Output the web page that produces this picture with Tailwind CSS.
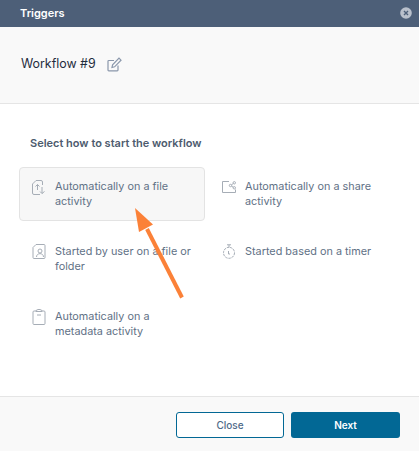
<!DOCTYPE html>
<html lang="en">
<head>
    <meta charset="UTF-8">
    <title>Triggers</title>
    <script src="https://cdn.jsdelivr.net/npm/@tailwindcss/browser@4"></script>
</head>
<body class="bg-white font-['Inter',sans-serif]">
    <div class="relative w-[419px] h-[451px] flex flex-col overflow-hidden">
        <!-- header -->
        <div class="h-[27px] bg-[#4d5f78] flex items-center justify-between pl-[20px] pr-[7px]">
            <span class="text-[11px] font-semibold text-white">Triggers</span>
            <svg class="w-[12px] h-[12px] mb-[2px]" viewBox="0 0 12 12">
                <circle cx="6" cy="6" r="5.8" fill="#b9c0cb"/>
                <path d="M4 4l4 4M8 4l-4 4" stroke="#4d5f78" stroke-width="1.4"/>
            </svg>
        </div>
        <!-- title -->
        <div class="h-[77px] bg-[#f9f9f9] border-b border-[#e5e5e5] flex items-center pl-[21px] gap-[11px] pb-[2px]">
            <span class="text-[12.4px] text-[#1f2d3d]">Workflow #9</span>
            <svg class="w-[15px] h-[15px]" viewBox="0 0 15 15" fill="none" stroke="#8a97ab" stroke-width="1.2">
                <path d="M11 8.5V13a.8.8 0 0 1-.8.8H1.8A.8.8 0 0 1 1 13V4.3a.8.8 0 0 1 .8-.8H7"/>
                <path d="M5 10.5l.6-2.7L12 1.2l2 2-6.4 6.6z"/>
            </svg>
        </div>
        <!-- options -->
        <div class="flex-1 pt-[31px] px-[19px]">
            <h2 class="pl-[11px] text-[11px] leading-[16px] font-semibold text-[#4d5b6e]">Select how to start the workflow</h2>
            <div class="mt-[16px] grid grid-cols-[186px_186px] gap-x-[4px] gap-y-[11px] text-[10.85px] leading-[15px] text-[#5f7186]">
                <div class="h-[54px] bg-[#f7f7f7] border border-[#e3e3e3] rounded-[4px] flex gap-[9px] pt-[11px] pl-[12px]">
                    <svg class="w-[14px] h-[15px] shrink-0 mt-[1px]" viewBox="0 0 14 15" fill="none" stroke="#a6adb6" stroke-width="1">
                        <path d="M8 14.500H2a1.500 1.500 0 0 1-1.500-1.500V4L4 .5h5a1.500 1.500 0 0 1 1.500 1.500v3"/>
                        <path d="M5.500 10V4.500M3.500 6.500l2-2 2 2"/>
                        <path d="M10 7v6.500M8 11.500l2 2 2.500-2"/>
                    </svg>
                    <span>Automatically on a file<br>activity</span>
                </div>
                <div class="h-[54px] border border-transparent flex gap-[9px] pt-[11px] pl-[12px]">
                    <svg class="w-[14px] h-[12px] shrink-0 mt-[2px]" viewBox="0 0 14 12" fill="none" stroke="#a6adb6" stroke-width="1">
                        <path d="M7 .5H.5v11h13V8.500"/>
                        <circle cx="8.500" cy="4.500" r="1.200"/>
                        <circle cx="12.300" cy="1.800" r="1.200"/>
                        <circle cx="12.300" cy="6.800" r="1.200"/>
                        <path d="M9.500 3.800l1.800-1.300M9.500 5.200l1.800 1"/>
                    </svg>
                    <span>Automatically on a share<br>activity</span>
                </div>
                <div class="h-[54px] border border-transparent flex gap-[9px] pt-[11px] pl-[12px]">
                    <svg class="w-[14px] h-[15px] shrink-0" viewBox="0 0 14 15" fill="none" stroke="#a6adb6" stroke-width="1">
                        <path d="M4 .5h8a1 1 0 0 1 1 1V13.500a1 1 0 0 1-1 1H2a1 1 0 0 1-1-1V3.500z"/>
                        <circle cx="8" cy="7" r="2"/>
                        <path d="M4.500 13c0-4.500 7-4.500 7 0"/>
                    </svg>
                    <span>Started by user on a file or<br>folder</span>
                </div>
                <div class="h-[54px] border border-transparent flex gap-[9px] pt-[11px] pl-[12px]">
                    <svg class="w-[14px] h-[15px] shrink-0" viewBox="0 0 14 15" fill="none" stroke="#a6adb6" stroke-width="1">
                        <circle cx="7" cy="8.800" r="5.500" stroke-dasharray="2.500 .8"/>
                        <path d="M5 .8h4M7 .8v2.500M6.500 7v3h1.500"/>
                    </svg>
                    <span>Started based on a timer</span>
                </div>
                <div class="h-[54px] border border-transparent flex gap-[9px] pt-[11px] pl-[12px]">
                    <svg class="w-[14px] h-[16px] shrink-0" viewBox="0 0 14 16" fill="none" stroke="#a6adb6" stroke-width="1">
                        <path d="M4 2H2a1 1 0 0 0-1 1v11.500a1 1 0 0 0 1 1h10a1 1 0 0 0 1-1V3a1 1 0 0 0-1-1h-2"/>
                        <path d="M4 1.500l2-1h2l2 1v1H4z"/>
                        <path d="M5 6h4"/>
                    </svg>
                    <span>Automatically on a<br>metadata activity</span>
                </div>
            </div>
        </div>
        <!-- footer -->
        <div class="h-[55px] bg-[#f9f9f9] border-t border-[#e5e5e5] flex justify-end items-start gap-[7px] pt-[15px] pr-[19px]">
            <button class="w-[108px] h-[26px] bg-white border border-[#026895] rounded-[3px] text-[10px] font-medium text-[#4f6a88]">Close</button>
            <button class="w-[109px] h-[26px] bg-[#026895] rounded-[3px] text-[10px] font-semibold text-white">Next</button>
        </div>
        <!-- annotation arrow -->
        <svg class="absolute left-0 top-0 pointer-events-none" width="419" height="451" viewBox="0 0 419 451">
            <path d="M182 297.500L147 229" stroke="#fb8138" stroke-width="4" fill="none"/>
            <path d="M135 208L153 224.500L139 232Z" fill="#fb8138"/>
        </svg>
    </div>
</body>
</html>
